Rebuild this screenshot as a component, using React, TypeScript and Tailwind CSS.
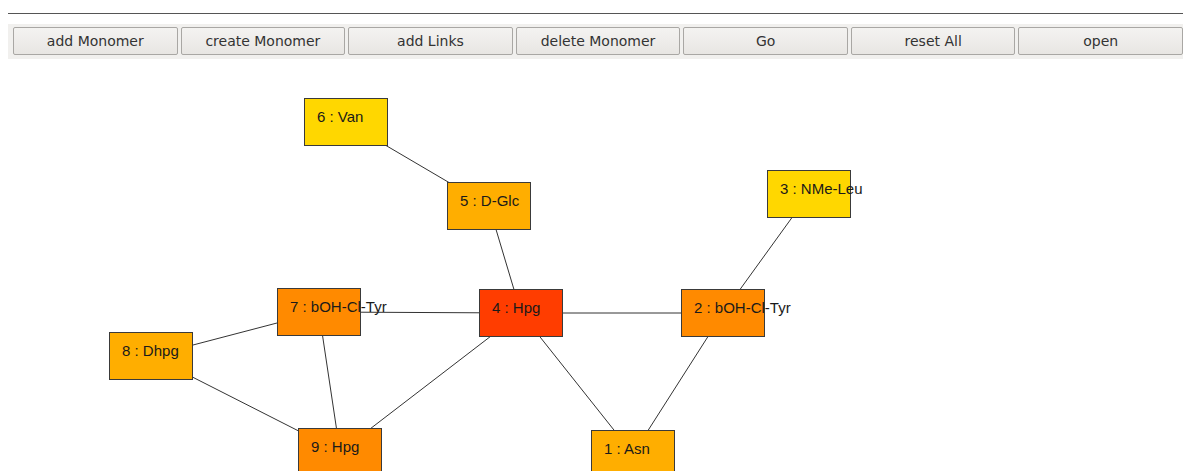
const buttons = ["add Monomer", "create Monomer", "add Links", "delete Monomer", "Go", "reset All", "open"];

type Node = { id: number; name: string; x: number; y: number; color: string };

// page coordinates of each monomer box (top-left)
const nodes: Node[] = [
  { id: 1, name: "Asn", x: 591, y: 430, color: "bg-[#ffae00]" },
  { id: 2, name: "bOH-Cl-Tyr", x: 681, y: 289, color: "bg-[#ff8a00]" },
  { id: 3, name: "NMe-Leu", x: 767, y: 170, color: "bg-[#ffd700]" },
  { id: 4, name: "Hpg", x: 479, y: 289, color: "bg-[#ff3d00]" },
  { id: 5, name: "D-Glc", x: 447, y: 182, color: "bg-[#ffae00]" },
  { id: 6, name: "Van", x: 304, y: 98, color: "bg-[#ffd700]" },
  { id: 7, name: "bOH-Cl-Tyr", x: 277, y: 288, color: "bg-[#ff8a00]" },
  { id: 8, name: "Dhpg", x: 109, y: 332, color: "bg-[#ffae00]" },
  { id: 9, name: "Hpg", x: 298, y: 428, color: "bg-[#ff8a00]" },
];

const links: [number, number][] = [
  [6, 5], [5, 4], [3, 2], [7, 4], [4, 2], [8, 7], [8, 9], [7, 9], [4, 9], [4, 1], [2, 1],
];

const TOP = 59;
const W = 84;
const H = 48;

const center = (id: number) => {
  const n = nodes.find((m) => m.id === id)!;
  return { cx: n.x + W / 2, cy: n.y - TOP + H / 2 };
};

export default function App() {
  return (
    <div className="w-[1183px] h-[471px] overflow-hidden bg-white font-['DejaVu_Sans',sans-serif]">
      <div className="pl-[8px] pt-[13px]">
        <div className="h-px bg-[#555]" />
        <div className="mt-[10px] bg-[#f1f0ee] pl-[5px] pt-[3px] pb-[4px] flex gap-[3px]">
          {buttons.map((b) => (
            <button
              key={b}
              className="flex-1 h-[28px] rounded-[2px] border border-[#a9a7a4] bg-gradient-to-b from-[#f4f3f1] to-[#e8e6e3] text-[14px] text-[#333] leading-none"
            >
              {b}
            </button>
          ))}
        </div>
      </div>
      <div className="relative h-[412px] overflow-hidden">
        <svg className="absolute inset-0" width="1183" height="412">
          {links.map(([a, b]) => {
            const p = center(a);
            const q = center(b);
            return <line key={`${a}-${b}`} x1={p.cx} y1={p.cy} x2={q.cx} y2={q.cy} stroke="#333" strokeWidth="1" />;
          })}
        </svg>
        {nodes.map((n) => (
          <div
            key={n.id}
            className={`absolute w-[84px] h-[48px] border border-[#3a3a3a] ${n.color} pl-[12px] pt-[9px] whitespace-nowrap font-['Liberation_Sans',sans-serif] text-[15px] leading-[18px] text-[#1a1a1a]`}
            style={{ left: n.x, top: n.y - TOP }}
          >
            {n.id} : {n.name}
          </div>
        ))}
      </div>
    </div>
  );
}
